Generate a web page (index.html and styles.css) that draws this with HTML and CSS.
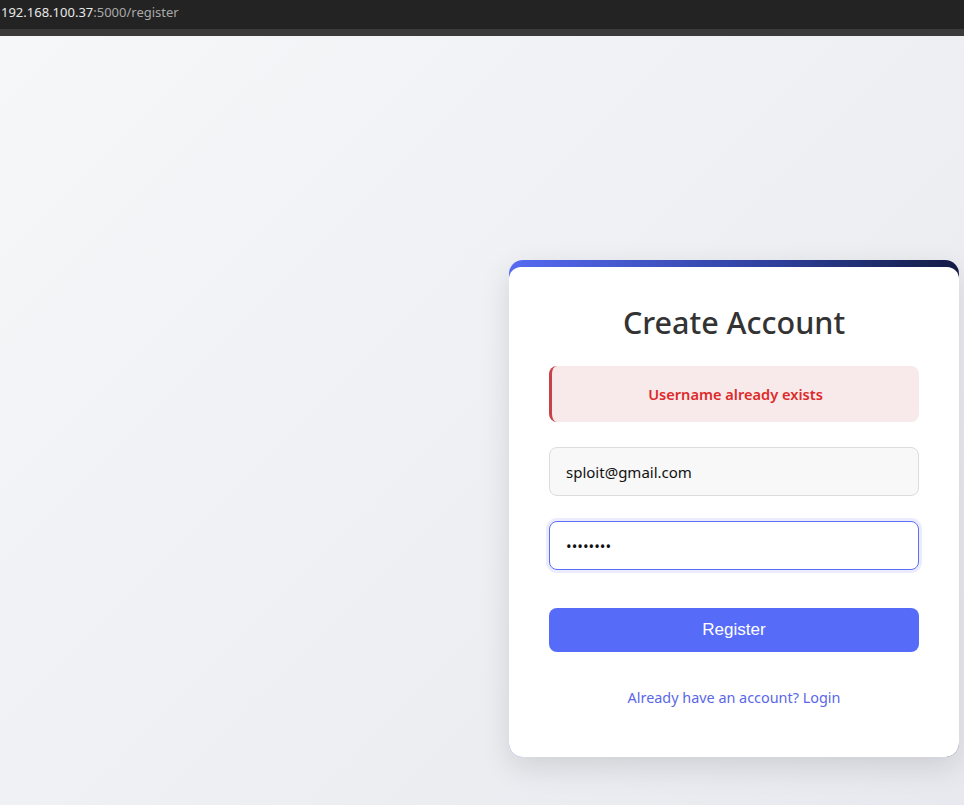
FILE: index.html
```
<!DOCTYPE html>
<html lang="en">
<head>
    <meta charset="UTF-8">
    <meta name="viewport" content="width=device-width, initial-scale=1.0">
    <title>Register</title>
    <link rel="stylesheet" href="styles.css">
</head>
<body>
    <div class="address-bar">
        <span class="host">192.168.100.37</span><span class="path">:5000/register</span>
    </div>
    <div class="toolbar-edge"></div>
    <div class="page">
        <div class="card">
            <div class="card-inner">
                <h1 class="title">Create Account</h1>
                <div class="error">Username already exists</div>
                <form class="form" onsubmit="return false;">
                    <input class="field" type="email" value="sploit@gmail.com">
                    <input class="field focused" type="password" value="12345678" autofocus>
                    <button class="register-button" type="submit">Register</button>
                </form>
                <a class="login-link" href="#">Already have an account? Login</a>
            </div>
        </div>
    </div>
</body>
</html>
```

FILE: styles.css
```
body {
    margin: 0;
    font-family: 'Noto Sans', 'Open Sans', sans-serif;
    background: #eceef2;
    height: 805px;
    overflow: hidden;
}
.address-bar {
    height: 29px;
    background: #232323;
    font-size: 13px;
    line-height: 24px;
    white-space: nowrap;
    padding-left: 1px;
}
.host {
    color: #e8e8e8;
}
.path {
    color: #a9a9a9;
}
.toolbar-edge {
    height: 7px;
    background: #3a3a3a;
}
.page {
    height: 769px;
    display: flex;
    justify-content: flex-end;
    align-items: flex-start;
    padding-right: 5px;
    box-sizing: border-box;
    padding-top: 224px;
    background: linear-gradient(135deg, #f6f7f9, #e8e9ee);
}
.card {
    width: 450px;
    background: linear-gradient(90deg, #566af2, #2d3f9a 60%, #131b43);
    border-radius: 14px;
    padding-top: 7px;
    box-shadow: 0 10px 30px rgba(0, 0, 0, 0.12);
}
.card-inner {
    background: #fff;
    border-radius: 12px 12px 14px 14px;
    padding: 33px 40px 50px;
}
.title {
    margin: 0 0 22px;
    text-align: center;
    color: #333;
    font-size: 30.5px;
    font-weight: 500;
    line-height: 44px;
}
.error {
    background: #f8eaea;
    border-left: 3px solid #c8424b;
    border-radius: 8px;
    color: #dd2a2a;
    font-weight: 600;
    font-size: 14.6px;
    text-align: center;
    height: 56px;
    line-height: 56px;
    margin-bottom: 25px;
}
.form {
    display: flex;
    flex-direction: column;
}
.field {
    height: 49px;
    box-sizing: border-box;
    padding: 0 16px;
    border: 1px solid #dcdcdc;
    border-radius: 8px;
    background: #f8f8f8;
    font-family: 'Noto Sans', 'Open Sans', sans-serif;
    font-size: 15px;
    color: #111;
    margin-bottom: 25px;
    outline: none;
}
.field.focused,
.field:focus {
    background: #fff;
    border-color: #5b6ef5;
    box-shadow: 0 0 0 3px rgba(91, 110, 245, 0.12);
}
.register-button {
    margin-top: 13px;
    height: 44px;
    border: none;
    border-radius: 8px;
    background: #566cf9;
    color: #fff;
    font-family: 'Liberation Sans', Arial, sans-serif;
    font-size: 17px;
    cursor: pointer;
}
.login-link {
    display: block;
    margin-top: 36px;
    text-align: center;
    color: #5a67e8;
    font-size: 14.4px;
    text-decoration: none;
}
```
